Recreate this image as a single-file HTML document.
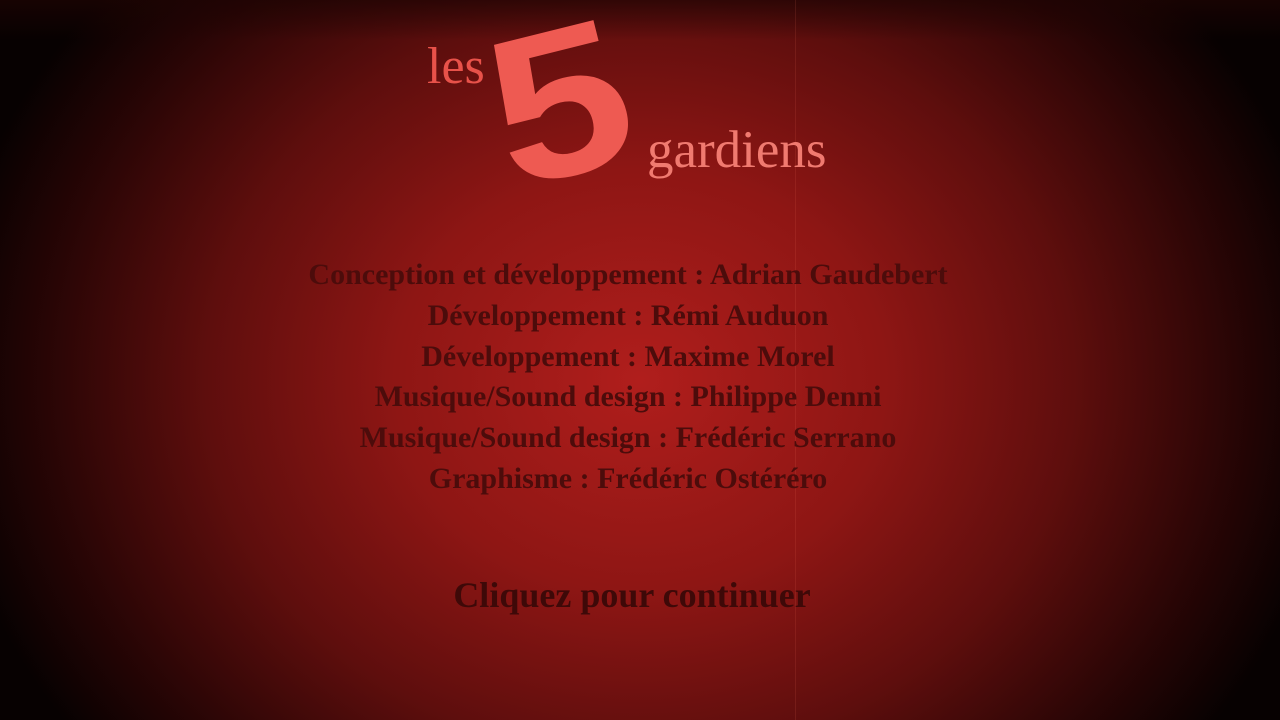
<!DOCTYPE html>
<html><head><meta charset="utf-8"><style>
html,body{margin:0;padding:0}
body{width:1280px;height:720px;overflow:hidden;position:relative;
background:radial-gradient(ellipse 700px 600px at 640px 380px,#b01e1c 0%,#8e1614 35%,#5e0e0d 62%,#280505 85%,#070101 100%);
font-family:"Liberation Serif",serif}
.top{position:absolute;left:0;top:0;width:1280px;height:40px;background:linear-gradient(rgba(30,4,3,0.7) 0%,rgba(40,5,4,0) 100%)}
.line{position:absolute;left:795px;top:0;width:1px;height:720px;background:rgba(255,120,100,0.12)}
.les{position:absolute;left:427px;top:41px;font-size:52px;color:#e8524a;line-height:1}
.five{position:absolute;left:502px;top:-2px;font-family:"Liberation Sans",sans-serif;font-weight:bold;font-size:210px;color:#ee5a52;line-height:1;transform:rotate(-14deg) scaleX(1.18);transform-origin:center}
.gard{position:absolute;left:647px;top:124px;font-size:53px;color:#f07a70;line-height:1}
.cred{position:absolute;left:-12px;width:1280px;top:255px;text-align:center;font-weight:bold;font-size:30px;line-height:40.8px;color:#4c0c0b}
.click{position:absolute;left:-8px;width:1280px;top:574px;text-align:center;font-weight:bold;font-size:36px;color:#3e0908}
</style></head><body>
<div class="top"></div><div class="line"></div>
<div class="les">les</div>
<div class="five">5</div>
<div class="gard">gardiens</div>
<div class="cred">Conception et développement : Adrian Gaudebert<br>Développement : Rémi Auduon<br>Développement : Maxime Morel<br>Musique/Sound design : Philippe Denni<br>Musique/Sound design : Frédéric Serrano<br>Graphisme : Frédéric Ostéréro</div>
<div class="click">Cliquez pour continuer</div>
</body></html>
